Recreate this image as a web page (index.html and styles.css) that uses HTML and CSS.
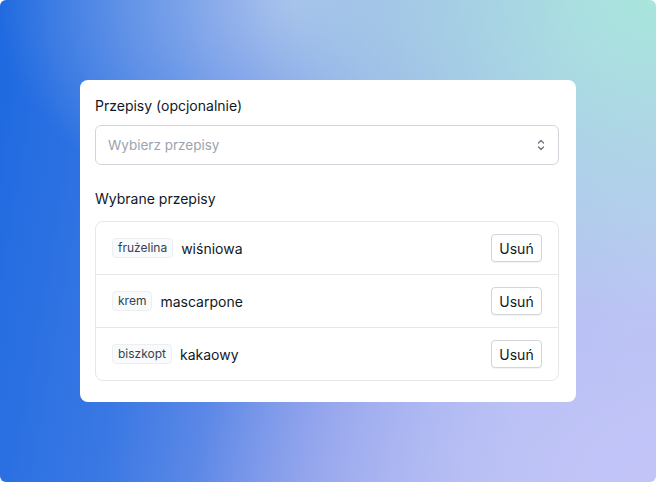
FILE: index.html
```html
<!DOCTYPE html>
<html lang="pl">
<head>
<meta charset="utf-8">
<link rel="stylesheet" href="styles.css">
</head>
<body>
<div class="stage">
  <div class="card">
    <label class="label">Przepisy (opcjonalnie)</label>
    <div class="select">
      <span class="placeholder">Wybierz przepisy</span>
      <svg class="chev" width="10" height="14" viewBox="0 0 10 14" fill="none" stroke="#6b7280" stroke-width="1.3" stroke-linecap="round" stroke-linejoin="round"><path d="M2.5 5 L5 2.5 L7.5 5"/><path d="M2.5 9 L5 11.5 L7.5 9"/></svg>
    </div>
    <div class="section">Wybrane przepisy</div>
    <ul class="list">
      <li class="row"><span class="badge">frużelina</span><span class="name">wiśniowa</span><button class="btn">Usuń</button></li>
      <li class="row"><span class="badge">krem</span><span class="name">mascarpone</span><button class="btn">Usuń</button></li>
      <li class="row"><span class="badge">biszkopt</span><span class="name">kakaowy</span><button class="btn">Usuń</button></li>
    </ul>
  </div>
</div>
</body>
</html>
```

FILE: styles.css
```css
* { box-sizing: border-box; }
html, body { margin: 0; padding: 0; background: #ffffff; }
body { font-family: Inter, "Noto Sans", sans-serif; color: #111827; }
.stage {
  width: 656px;
  height: 482px;
  border-radius: 6px;
  overflow: hidden;
  padding: 80px 80px;
  background:
    radial-gradient(ellipse 420px 320px at 100% 0%, rgba(168,230,220,1) 0%, rgba(168,226,222,0.6) 45%, rgba(168,226,222,0) 100%),
    radial-gradient(ellipse 460px 300px at 100% 100%, rgba(194,196,248,1) 0%, rgba(190,194,246,0.6) 45%, rgba(190,194,246,0) 100%),
    radial-gradient(ellipse 300px 220px at 45% 0%, rgba(180,200,238,0.85) 0%, rgba(180,200,238,0) 100%),
    linear-gradient(100deg, #1d69e0 0%, #3a78e4 25%, #8a9eea 55%, #b4c0f2 80%, #bcc4f4 100%);
}
.card {
  background: #ffffff;
  border-radius: 8px;
  padding: 16px 17px 21px 15px;
  display: flex;
  flex-direction: column;
}
.label {
  font-size: 14px;
  line-height: 20px;
  font-weight: 400;
  color: #111827;
}
.select {
  margin-top: 9px;
  height: 40px;
  border: 1px solid #d1d5db;
  border-radius: 6px;
  display: flex;
  align-items: center;
  justify-content: space-between;
  padding: 0 12px 0 12px;
}
.placeholder { font-size: 13.5px; color: #9ca3af; }
.chev { display: block; }
.section {
  margin-top: 24px;
  font-size: 14px;
  line-height: 20px;
  font-weight: 400;
  color: #111827;
}
.list {
  list-style: none;
  margin: 12px 0 0;
  padding: 0;
  border: 1px solid #e5e7eb;
  border-radius: 8px;
}
.row {
  display: flex;
  align-items: center;
  height: 53px;
  padding: 0 16px;
  border-top: 1px solid #e5e7eb;
}
.row:first-child { border-top: none; height: 52px; }
.badge {
  font-size: 12px;
  line-height: 18px;
  color: #374151;
  background: #f9fafb;
  border: 1px solid #eceef1;
  border-radius: 4px;
  padding: 0 5px;
}
.name {
  margin-left: 8px;
  font-size: 14px;
  font-weight: 400;
  color: #111827;
  flex: 1;
}
.btn {
  font-family: inherit;
  font-size: 14px;
  font-weight: 400;
  color: #111827;
  background: #ffffff;
  border: 1px solid #d1d5db;
  border-radius: 4px;
  height: 28px;
  width: 51px;
  padding: 0;
  box-shadow: 0 1px 1px rgba(0,0,0,0.05);
}
```
